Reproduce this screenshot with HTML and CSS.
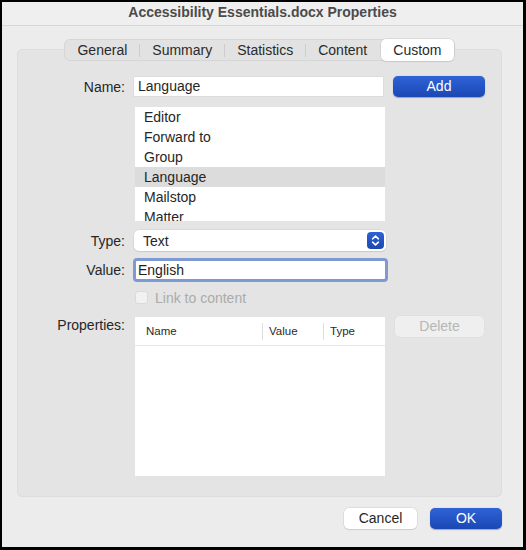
FILE: index.html
```html
<!DOCTYPE html>
<html>
<head>
<meta charset="utf-8">
<link rel="stylesheet" href="styles.css">
</head>
<body>
<div class="window">
  <div class="titlebar">Accessibility Essentials.docx Properties</div>
  <div class="content">
    <div class="tabs">
      <div class="tab">General</div>
      <div class="sep"></div>
      <div class="tab">Summary</div>
      <div class="sep"></div>
      <div class="tab">Statistics</div>
      <div class="sep"></div>
      <div class="tab">Content</div>
      <div class="tab selected">Custom</div>
    </div>
    <div class="box">
      <div class="row row-name">
        <div class="label">Name:</div>
        <div class="textfield">Language</div>
        <div class="btn blue">Add</div>
      </div>
      <div class="row row-list">
        <div class="label"></div>
        <div class="list">
          <div class="item">Editor</div>
          <div class="item">Forward to</div>
          <div class="item">Group</div>
          <div class="item hl">Language</div>
          <div class="item">Mailstop</div>
          <div class="item">Matter</div>
        </div>
      </div>
      <div class="row row-type">
        <div class="label">Type:</div>
        <div class="popup">
          <span>Text</span>
          <span class="stepper">
            <svg width="17" height="17" viewBox="0 0 17 17"><path d="M5.6 6.8 L8.5 4.2 L11.4 6.8 M5.6 10.2 L8.5 12.8 L11.4 10.2" fill="none" stroke="#fff" stroke-width="1.6" stroke-linecap="round" stroke-linejoin="round"/></svg>
          </span>
        </div>
      </div>
      <div class="row row-value">
        <div class="label">Value:</div>
        <div class="focusring"><div class="valuefield">English</div></div>
      </div>
      <div class="row row-check">
        <div class="label"></div>
        <div class="check"><span class="box-check"></span><span class="check-text">Link to content</span></div>
      </div>
      <div class="row row-props">
        <div class="label props-label">Properties:</div>
        <div class="table">
          <div class="thead">
            <div class="th th-name">Name</div>
            <div class="th th-value">Value</div>
            <div class="th th-type">Type</div>
          </div>
        </div>
        <div class="btn disabled">Delete</div>
      </div>
    </div>
    <div class="footer">
      <div class="btn white">Cancel</div>
      <div class="btn blue ok">OK</div>
    </div>
  </div>
</div>
</body>
</html>
```
FILE: styles.css
```css
html, body {
  margin: 0;
  padding: 0;
  background: #000;
}
body {
  font-family: "Liberation Sans", Arial, sans-serif;
  font-size: 14px;
  color: #262626;
}
.window {
  box-sizing: border-box;
  width: 526px;
  height: 550px;
  border-style: solid;
  border-color: #000;
  border-width: 2px 3px 3px 2px;
  background: #ececec;
}
.titlebar {
  height: 23px;
  line-height: 20px;
  background: #efefef;
  border-bottom: 1px solid #d7d7d7;
  text-align: center;
  font-weight: bold;
  color: #4b4b4b;
  font-size: 14px;
}
.content {
  padding: 13px 21px 0 15px;
}
.tabs {
  position: relative;
  z-index: 1;
  display: flex;
  align-items: center;
  width: max-content;
  margin: 0 auto;
  height: 22px;
  box-sizing: border-box;
  background: #e2e2e2;
  border: 1px solid #d6d6d6;
  border-radius: 6px;
}
.tab {
  height: 20px;
  line-height: 20px;
  padding: 0 12px;
  color: #2a2a2a;
}
.sep {
  width: 1px;
  height: 13px;
  background: #cdcdcd;
}
.tab.selected {
  background: #fff;
  border-radius: 5px;
  box-shadow: 0 0 0 0.5px #c8c8c8, 0 1px 1px rgba(0,0,0,0.12);
  padding: 0 12px;
  margin-left: 2px;
  height: 22px;
  line-height: 22px;
}
.box {
  margin-top: -12px;
  height: 448px;
  box-sizing: border-box;
  background: #e4e4e4;
  border: 1px solid #dddddd;
  border-radius: 5px;
  padding-top: 26px;
}
.row {
  display: grid;
  grid-template-columns: 107px 250px 92px;
  column-gap: 9px;
  align-items: center;
}
.label {
  text-align: right;
  color: #262626;
}
.row-name { height: 21px; }
.textfield {
  height: 19px;
  line-height: 19px;
  background: #fff;
  padding-left: 4px;
  box-shadow: 0 0 0 0.5px #d4d4d4;
  margin-right: 1px;
}
.btn {
  height: 21px;
  line-height: 21px;
  text-align: center;
  border-radius: 5px;
  box-sizing: border-box;
}
.btn.blue {
  background: linear-gradient(#2e63d6, #1b47b5);
  color: #fff;
  box-shadow: 0 0.5px 1px rgba(0,0,0,0.3);
}
.row-list { margin-top: 10px; }
.list {
  height: 114px;
  overflow: hidden;
  background: #fff;
  margin-left: 1px;
  margin-right: -1px;
}
.item {
  height: 20px;
  line-height: 20px;
  padding-left: 9px;
}
.item.hl { background: #dcdcdc; }
.row-type { margin-top: 9px; }
.popup {
  height: 21px;
  display: flex;
  align-items: center;
  justify-content: space-between;
  background: #fff;
  border-radius: 5px;
  box-shadow: 0 0 0 0.5px #cfcfcf, 0 1px 1px rgba(0,0,0,0.12);
  padding: 0 2px 0 9px;
  margin-right: -2px;
}
.stepper {
  width: 17px;
  height: 17px;
  border-radius: 4px;
  background: linear-gradient(#2d62d4, #1b47b5);
  display: flex;
}
.row-value { margin-top: 7px; }
.focusring {
  height: 24px;
  box-sizing: border-box;
  margin-left: -1px;
  margin-right: -4px;
  border: 3px solid #7f9ad2;
  border-radius: 4px;
  background: #fff;
}
.valuefield {
  height: 18px;
  line-height: 18px;
  padding-left: 2px;
  color: #1e1e1e;
}
.row-check { margin-top: 9px; }
.check {
  display: flex;
  align-items: center;
  height: 13px;
  margin-left: 1px;
}
.box-check {
  width: 13px;
  height: 13px;
  box-sizing: border-box;
  border: 1px solid #dadada;
  background: #f1f1f1;
  border-radius: 3px;
}
.check-text {
  margin-left: 7px;
  color: #ababab;
}
.row-props {
  margin-top: 12px;
  align-items: start;
}
.props-label { line-height: 18px; }
.table {
  height: 159px;
  background: #fff;
  margin-top: 1px;
  margin-left: 1px;
  margin-right: -1px;
}
.thead {
  height: 28px;
  border-bottom: 1px solid #e8e8e8;
  display: flex;
  align-items: center;
  font-size: 11.5px;
  color: #2a2a2a;
}
.th {
  height: 17px;
  line-height: 17px;
  box-sizing: border-box;
}
.th-name { width: 128px; padding-left: 11px; border-right: 1px solid #dedede; }
.th-value { width: 61px; padding-left: 6px; border-right: 1px solid #dedede; }
.th-type { padding-left: 6px; }
.btn.disabled {
  background: #efefef;
  color: #b6b6b6;
  box-shadow: 0 0 0 0.5px #dcdcdc;
  margin-left: 2px;
  margin-right: 1px;
}
.footer {
  display: flex;
  justify-content: flex-end;
  gap: 13px;
  margin-top: 11px;
}
.btn.white {
  width: 73px;
  background: #fff;
  color: #262626;
  box-shadow: 0 0 0 0.5px #cfcfcf, 0 1px 1px rgba(0,0,0,0.15);
}
.btn.ok { width: 72px; }
```
